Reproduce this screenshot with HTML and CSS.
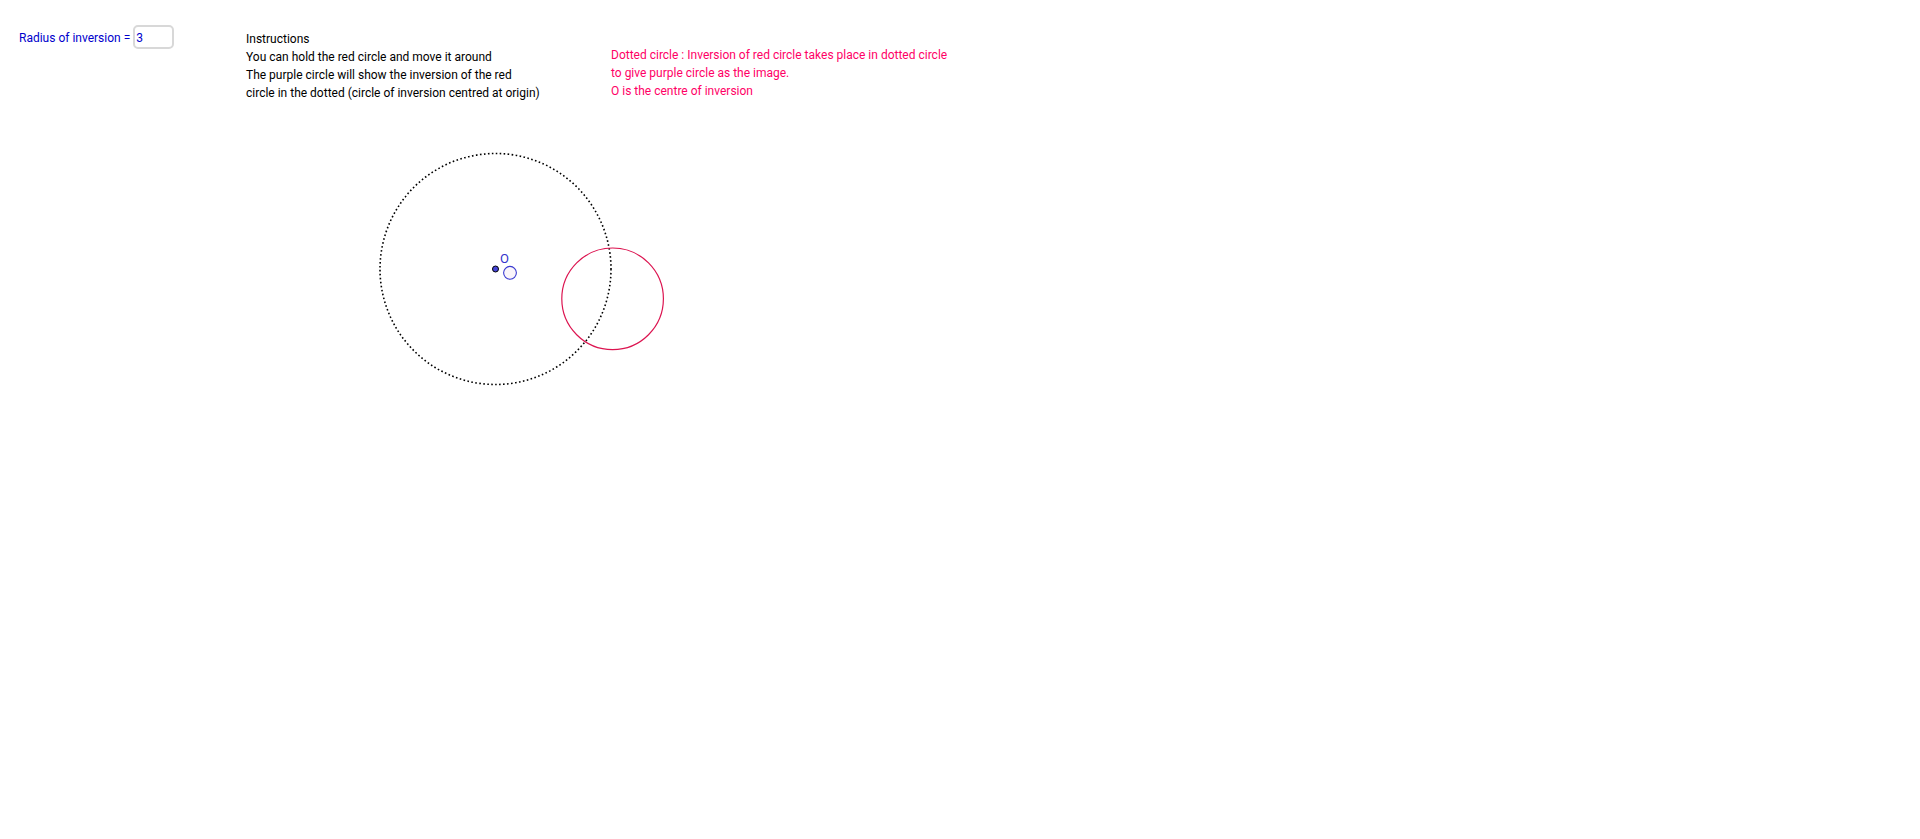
FILE: index.html
```html
<!DOCTYPE html>
<html lang="en">
<head>
  <meta charset="utf-8">
  <title>Inversion of a circle</title>
  <link rel="stylesheet" href="styles.css">
</head>
<body>
  <div class="panel">
    <form class="radius-form">
      <label for="radius">Radius of inversion =</label>
      <input type="text" id="radius" name="radius" value="3">
    </form>

    <div class="instructions">
      Instructions<br>
      You can hold the red circle and move it around<br>
      The purple circle will show the inversion of the red<br>
      circle in the dotted (circle of inversion centred at origin)
    </div>

    <div class="notes">
      Dotted circle : Inversion of red circle takes place in dotted circle<br>
      to give purple circle as the image.<br>
      O is the centre of inversion
    </div>
  </div>

  <svg class="board">
    <!-- circle of inversion -->
    <circle class="inversion-circle" cx="495.5" cy="149" r="115.5"/>
    <!-- image of the red circle -->
    <circle class="image-circle" cx="510" cy="152.8" r="6.4"/>
    <circle class="red-circle" cx="612.6" cy="178.8" r="50.8"/>
    <!-- origin -->
    <circle class="origin" cx="495.5" cy="149" r="3"/>
    <text class="origin-label" x="500" y="143">O</text>
  </svg>
</body>
</html>
```

FILE: styles.css
```css
body {
  font-family: Roboto, "Open Sans", sans-serif;
  font-size: 12px;
  line-height: 18px;
  background: #fff;
  margin: 0;
}

.panel {
  display: flex;
  align-items: flex-start;
  height: 120px;
  box-sizing: border-box;
  padding: 25px 19px 0;
}

.radius-form {
  display: flex;
  align-items: flex-start;
  gap: 3px;
  width: 227px;
  color: #0000cc;
}

.radius-form label {
  padding-top: 4px;
}

.radius-form input {
  width: 41px;
  height: 24px;
  box-sizing: border-box;
  padding: 1px 1px 0;
  border: 2px solid #d8d8d8;
  border-radius: 5px;
  background: #fff;
  color: #0000cc;
  font: inherit;
}

.instructions {
  width: 365px;
  padding-top: 5px;
  color: #000;
}

.notes {
  padding-top: 21px;
  color: #ff0066;
}

.board {
  display: block;
  width: 100%;
  height: 300px;
}

.inversion-circle {
  fill: none;
  stroke: #000;
  stroke-width: 1.6;
  stroke-dasharray: 1.6 2.4;
}

.image-circle {
  fill: #faf5fa;
  stroke: #3a3ad0;
  stroke-width: 1.1;
}

.red-circle {
  fill: none;
  stroke: #dc1450;
  stroke-width: 1.2;
}

.origin {
  fill: #4545d8;
  stroke: #000;
  stroke-width: 1;
}

.origin-label {
  fill: #3333cc;
  font-size: 13px;
}
```
